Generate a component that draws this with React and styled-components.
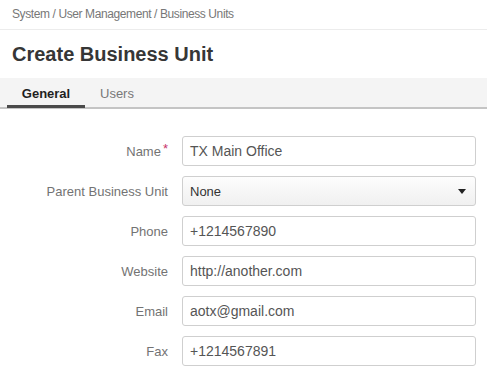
import React from 'react';
import styled, { createGlobalStyle } from 'styled-components';

const GlobalStyle = createGlobalStyle`
  body {
    margin: 0;
    background: #fff;
    font-family: 'Liberation Sans', Arial, sans-serif;
  }
`;

const Page = styled.div`
  width: 487px;
  height: 373px;
  overflow: hidden;
  background: #fff;
`;

const Breadcrumbs = styled.div`
  height: 30px;
  padding: 0 12px 1px;
  display: flex;
  align-items: center;
  font-size: 12px;
  letter-spacing: -0.4px;
  color: #777;
  border-bottom: 1px solid #ececec;
  box-sizing: border-box;
`;

const Title = styled.h1`
  margin: 0;
  padding: 13px 12px 0;
  height: 48px;
  box-sizing: border-box;
  font-size: 20px;
  font-weight: bold;
  color: #363636;
`;

const TabBar = styled.div`
  display: flex;
  background: #f4f4f4;
  height: 31px;
  padding-left: 7px;
  border-bottom: 2px solid #c4c4c4;
  box-sizing: border-box;
`;

const Tab = styled.div`
  padding: 3px 15px 0;
  display: flex;
  align-items: center;
  justify-content: center;
  font-size: 13px;
  color: ${(p) => (p.$active ? '#1f1f1f' : '#787878')};
  font-weight: ${(p) => (p.$active ? 'bold' : 'normal')};
  border-bottom: 3px solid ${(p) => (p.$active ? '#4a4a4a' : 'transparent')};
  margin-bottom: -1px;
  width: ${(p) => (p.$active ? '78px' : 'auto')};
  box-sizing: border-box;
`;

const Form = styled.div`
  display: flex;
  flex-direction: column;
  gap: 10px;
  padding-top: 27px;
`;

const Row = styled.div`
  display: grid;
  grid-template-columns: 168px 294px;
  column-gap: 14px;
  align-items: center;
`;

const Label = styled.label`
  text-align: right;
  font-size: 13px;
  color: #737373;
`;

const Star = styled.span`
  color: #c8336a;
  margin-left: 2px;
  position: relative;
  top: -3px;
`;

const Input = styled.div`
  height: 30px;
  box-sizing: border-box;
  border: 1px solid #cfcfcf;
  border-radius: 3px;
  padding: 0 7px;
  display: flex;
  align-items: center;
  font-size: 14px;
  color: #555;
  background: #fff;
`;

const Select = styled(Input)`
  justify-content: space-between;
  font-size: 13px;
  color: #333;
  padding-right: 9px;
  background: linear-gradient(#fdfdfd, #f0f0f0);
`;

const Caret = styled.span`
  width: 0;
  height: 0;
  border-left: 4px solid transparent;
  border-right: 4px solid transparent;
  border-top: 5px solid #222;
`;

const fields = [
  { label: 'Name', value: 'TX Main Office', required: true },
  { label: 'Parent Business Unit', value: 'None', select: true },
  { label: 'Phone', value: '+1214567890' },
  { label: 'Website', value: 'http://another.com' },
  { label: 'Email', value: 'aotx@gmail.com' },
  { label: 'Fax', value: '+1214567891' },
];

export default function App() {
  return (
    <Page>
      <GlobalStyle />
      <Breadcrumbs>System / User Management / Business Units</Breadcrumbs>
      <Title>Create Business Unit</Title>
      <TabBar>
        <Tab $active>General</Tab>
        <Tab>Users</Tab>
      </TabBar>
      <Form>
        {fields.map((f) => (
          <Row key={f.label}>
            <Label>
              {f.label}
              {f.required && <Star>*</Star>}
            </Label>
            {f.select ? (
              <Select>
                {f.value}
                <Caret />
              </Select>
            ) : (
              <Input>{f.value}</Input>
            )}
          </Row>
        ))}
      </Form>
    </Page>
  );
}
